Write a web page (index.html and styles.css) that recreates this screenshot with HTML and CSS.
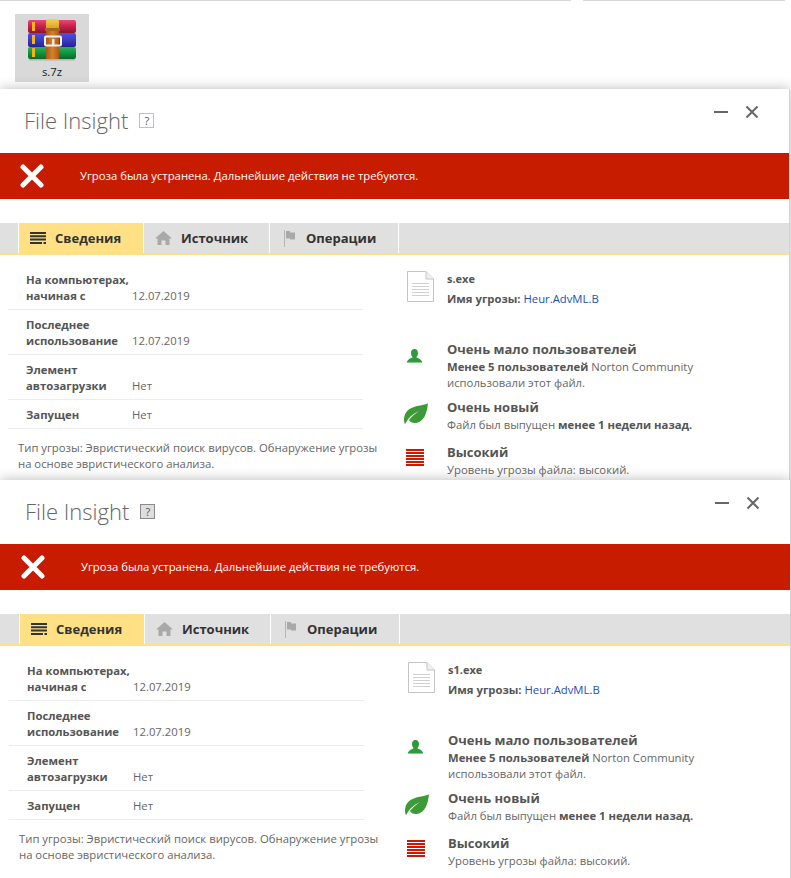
FILE: index.html
```html
<!DOCTYPE html>
<html lang="ru">
<head>
<meta charset="utf-8">
<title>File Insight</title>
<link rel="stylesheet" href="styles.css">
</head>
<body>
<svg class="defs" width="0" height="0" aria-hidden="true">
  <defs>
    <linearGradient id="g-red" x1="0" y1="0" x2="0" y2="1"><stop offset="0" stop-color="#e8487a"/><stop offset=".5" stop-color="#c6204c"/><stop offset="1" stop-color="#8c1434"/></linearGradient>
    <linearGradient id="g-blue" x1="0" y1="0" x2="0" y2="1"><stop offset="0" stop-color="#5050d8"/><stop offset=".5" stop-color="#3c3cc4"/><stop offset="1" stop-color="#24248c"/></linearGradient>
    <linearGradient id="g-green" x1="0" y1="0" x2="0" y2="1"><stop offset="0" stop-color="#2cb060"/><stop offset=".5" stop-color="#0f943f"/><stop offset="1" stop-color="#0a6a2c"/></linearGradient>
    <linearGradient id="g-gold" x1="0" y1="0" x2="0" y2="1"><stop offset="0" stop-color="#f4d24a"/><stop offset="1" stop-color="#d79a1e"/></linearGradient>
    <linearGradient id="g-belt" x1="0" y1="0" x2="1" y2="0"><stop offset="0" stop-color="#a85a14"/><stop offset=".5" stop-color="#d6802c"/><stop offset="1" stop-color="#a85a14"/></linearGradient>
  </defs>
  <symbol id="i-x" viewBox="0 0 24 24"><path d="M3 3 L21 21 M21 3 L3 21" stroke="#fff" stroke-width="5" stroke-linecap="round" fill="none"/></symbol>
  <symbol id="i-list" viewBox="0 0 16 12"><path d="M0 0h16v2H0zM0 3.300h16v2H0zM0 6.600h16v2H0zM0 10h12v2H0zM13.500 10H16v2h-2.500z" fill="#333"/></symbol>
  <symbol id="i-home" viewBox="0 0 17 14"><path d="M8.500 0 L17 7.500 H14.500 V14 H10.500 V9.500 H6.500 V14 H2.500 V7.500 H0 Z" fill="#a9a9a9"/></symbol>
  <symbol id="i-flag" viewBox="0 0 12 17"><path d="M0 0h1v17H0z" fill="#b5b5b5"/><path d="M2 1 H6 V2.500 H11 V9.500 H6 V8.500 H2 Z" fill="#a9a9a9"/></symbol>
  <symbol id="i-file" viewBox="0 0 27 31"><path d="M.5 .5 H19 L26.500 8 V30.500 H.5 Z" fill="#fff" stroke="#c4c4c4"/><path d="M19 .5 V8 H26.500" fill="#f1f1f1" stroke="#c4c4c4"/><path d="M5 12.500h17M5 15.500h17M5 18.500h17M5 21.500h17M5 24.500h17" stroke="#d0d0d0"/></symbol>
  <symbol id="i-user" viewBox="0 0 15 14"><path d="M7.500 0 C10 0 11 2 11 4 C11 6 10 7.500 9.300 8.300 C11 9.500 14 10 15 12.500 V13 H0 V12.500 C1 10 4 9.500 5.700 8.300 C5 7.500 4 6 4 4 C4 2 5 0 7.500 0 Z" fill="#2f9a3c"/><path d="M0 13.500h15" stroke="#8cc893"/></symbol>
  <symbol id="i-leaf" viewBox="0 0 24 21"><path d="M24 0 C22 2 16 2 10 4 C3 6 0 11 0 17 C0 18.500 .5 20 1 21 C2 20 3 17 6 14 C9 11 13 9 15 8 C12 10 8 13 5 17 C6 19 9 20.500 12 20 C20 19 23 10 24 0 Z" fill="#3c9a37"/></symbol>
  <symbol id="i-bars" viewBox="0 0 18 17"><path d="M0 0h18v2H0zM0 3h18v2H0zM0 6h18v2H0zM0 9h18v2H0zM0 12h18v2H0zM0 15h18v2H0z" fill="#c81c00"/></symbol>
  <symbol id="i-rar" viewBox="0 0 48 42">
    <rect x="0" y="1" width="48" height="13" rx="2" fill="url(#g-red)"/>
    <rect x="0" y="14" width="48" height="14" rx="2" fill="url(#g-blue)"/>
    <rect x="0" y="28" width="48" height="12" rx="2" fill="url(#g-green)"/>
    <rect x="4" y="3" width="3" height="9" fill="#f7b215"/>
    <rect x="4" y="16" width="3" height="9" fill="#f7b215"/>
    <rect x="4" y="29" width="3" height="9" fill="#f7b215"/>
    <rect x="18" y="0" width="13" height="11" rx="3" fill="url(#g-gold)"/>
    <rect x="17" y="9" width="15" height="3" fill="#a8651e"/>
    <rect x="18" y="12" width="13" height="29" fill="url(#g-belt)"/>
    <rect x="17" y="17.500" width="16" height="9" rx="1" fill="none" stroke="#f2f2f2" stroke-width="2"/>
    <rect x="24" y="20" width="2.500" height="6" fill="#e8e8e8"/>
    <rect x="1" y="40" width="46" height="1.500" fill="#b4b4b4"/>
  </symbol>
</svg>

<header class="desktop">
  <div class="rule"><span class="rule-a"></span><span class="rule-b"></span></div>
  <div class="file-tile">
    <svg class="rar"><use href="#i-rar"/></svg>
    <span class="file-name">s.7z</span>
  </div>
</header>

<section class="window">
  <div class="titlebar">
    <h1 class="title">File Insight</h1>
    <span class="help">?</span>
    <span class="min"></span>
    <svg class="close" viewBox="0 0 14 14"><path d="M1.500 1.500 L12.500 12.500 M12.500 1.500 L1.500 12.500" stroke="#666" stroke-width="2" fill="none"/></svg>
  </div>
  <div class="banner">
    <svg class="banner-x"><use href="#i-x"/></svg>
    <span>Угроза была устранена. Дальнейшие действия не требуются.</span>
  </div>
  <nav class="tabs">
    <span class="tab tab-active tab-a"><svg class="ic-list"><use href="#i-list"/></svg>Сведения</span>
    <span class="tab tab-b"><svg class="ic-home"><use href="#i-home"/></svg>Источник</span>
    <span class="tab tab-c"><svg class="ic-flag"><use href="#i-flag"/></svg>Операции</span>
  </nav>
  <div class="content">
    <div class="left">
      <div class="row"><span class="label">На компьютерах, начиная с</span><span class="value">12.07.2019</span></div>
      <div class="row"><span class="label">Последнее использование</span><span class="value">12.07.2019</span></div>
      <div class="row"><span class="label">Элемент автозагрузки</span><span class="value">Нет</span></div>
      <div class="row"><span class="label">Запущен</span><span class="value">Нет</span></div>
      <p class="desc">Тип угрозы: Эвристический поиск вирусов. Обнаружение угрозы на основе эвристического анализа.</p>
    </div>
    <div class="right">
      <div class="item item-file">
        <div class="icon-col"><svg class="ic-file"><use href="#i-file"/></svg></div>
        <div>
          <div class="fname">s.exe</div>
          <div class="threat"><b>Имя угрозы:</b> <a class="link">Heur.AdvML.B</a></div>
        </div>
      </div>
      <div class="item item-users">
        <div class="icon-col"><svg class="ic-user"><use href="#i-user"/></svg></div>
        <div>
          <div class="head">Очень мало пользователей</div>
          <div class="text"><b>Менее 5 пользователей</b> Norton Community<br>использовали этот файл.</div>
        </div>
      </div>
      <div class="item item-new">
        <div class="icon-col"><svg class="ic-leaf"><use href="#i-leaf"/></svg></div>
        <div>
          <div class="head">Очень новый</div>
          <div class="text">Файл был выпущен <b>менее 1 недели назад.</b></div>
        </div>
      </div>
      <div class="item item-level">
        <div class="icon-col"><svg class="ic-bars"><use href="#i-bars"/></svg></div>
        <div>
          <div class="head">Высокий</div>
          <div class="text">Уровень угрозы файла: высокий.</div>
        </div>
      </div>
    </div>
  </div>
</section>

<section class="window window-second">
  <div class="titlebar">
    <h1 class="title">File Insight</h1>
    <span class="help help-hover">?</span>
    <span class="min"></span>
    <svg class="close" viewBox="0 0 14 14"><path d="M1.500 1.500 L12.500 12.500 M12.500 1.500 L1.500 12.500" stroke="#666" stroke-width="2" fill="none"/></svg>
  </div>
  <div class="banner">
    <svg class="banner-x"><use href="#i-x"/></svg>
    <span>Угроза была устранена. Дальнейшие действия не требуются.</span>
  </div>
  <nav class="tabs">
    <span class="tab tab-active tab-a"><svg class="ic-list"><use href="#i-list"/></svg>Сведения</span>
    <span class="tab tab-b"><svg class="ic-home"><use href="#i-home"/></svg>Источник</span>
    <span class="tab tab-c"><svg class="ic-flag"><use href="#i-flag"/></svg>Операции</span>
  </nav>
  <div class="content">
    <div class="left">
      <div class="row"><span class="label">На компьютерах, начиная с</span><span class="value">12.07.2019</span></div>
      <div class="row"><span class="label">Последнее использование</span><span class="value">12.07.2019</span></div>
      <div class="row"><span class="label">Элемент автозагрузки</span><span class="value">Нет</span></div>
      <div class="row"><span class="label">Запущен</span><span class="value">Нет</span></div>
      <p class="desc">Тип угрозы: Эвристический поиск вирусов. Обнаружение угрозы на основе эвристического анализа.</p>
    </div>
    <div class="right">
      <div class="item item-file">
        <div class="icon-col"><svg class="ic-file"><use href="#i-file"/></svg></div>
        <div>
          <div class="fname">s1.exe</div>
          <div class="threat"><b>Имя угрозы:</b> <a class="link">Heur.AdvML.B</a></div>
        </div>
      </div>
      <div class="item item-users">
        <div class="icon-col"><svg class="ic-user"><use href="#i-user"/></svg></div>
        <div>
          <div class="head">Очень мало пользователей</div>
          <div class="text"><b>Менее 5 пользователей</b> Norton Community<br>использовали этот файл.</div>
        </div>
      </div>
      <div class="item item-new">
        <div class="icon-col"><svg class="ic-leaf"><use href="#i-leaf"/></svg></div>
        <div>
          <div class="head">Очень новый</div>
          <div class="text">Файл был выпущен <b>менее 1 недели назад.</b></div>
        </div>
      </div>
      <div class="item item-level">
        <div class="icon-col"><svg class="ic-bars"><use href="#i-bars"/></svg></div>
        <div>
          <div class="head">Высокий</div>
          <div class="text">Уровень угрозы файла: высокий.</div>
        </div>
      </div>
    </div>
  </div>
</section>
</body>
</html>
```
FILE: styles.css
```css
* { box-sizing: border-box; }
html, body { margin: 0; padding: 0; height: 878px; overflow: hidden; background: #fff; }
body { font-family: "Open Sans", "Noto Sans", sans-serif; font-size: 11.3px; line-height: 16px; color: #666; }
.defs { position: absolute; }
svg { display: block; }

.desktop { height: 89px; }
.rule { display: flex; gap: 12px; height: 1px; }
.rule-a { width: 571px; background: #d8d8d8; }
.rule-b { width: 202px; background: #d8d8d8; }
.file-tile { width: 74px; height: 68px; margin: 13px 0 0 15px; background: #d9d9d9; display: flex; flex-direction: column; align-items: center; padding-top: 5px; }
.rar { width: 48px; height: 42px; }
.file-name { color: #222; margin-top: 3px; }

.window { --x: 0px; position: relative; width: 790px; height: 391px; overflow: hidden; background: #fff; border-right: 1px solid #d4d4d4; box-shadow: 0 0 12px rgba(0,0,0,.28); clip-path: inset(-14px -1px 0 -14px); }
.window-second { --x: 1px; width: 791px; height: 398px; }

.titlebar { height: 64px; display: flex; align-items: flex-start; padding-left: calc(24px + var(--x)); }
.title { margin: 14px 0 0; font-weight: 300; font-size: 22px; line-height: 34px; color: #666; }
.help { width: 15px; height: 15px; margin: 24px 0 0 11px; border: 1px solid #c0c0c0; font-size: 11px; line-height: 13px; text-align: center; color: #555; }
.help-hover { background: #dedede; border-color: #8a8a8a; }
.min { width: 14px; height: 2px; margin: 22px 0 0 auto; background: #666; }
.close { width: 14px; height: 14px; margin: 16px 30px 0 17px; }

.banner { height: 46px; background: #c81c00; color: #fff; display: flex; align-items: center; padding-left: calc(20px + var(--x)); }
.banner-x { width: 24px; height: 24px; margin-right: 36px; }

.tabs { height: 32px; margin-top: 24px; background: #e0e0e0; border-bottom: 2px solid #ffe085; display: flex; padding-left: calc(18px + var(--x)); }
.tab { display: flex; align-items: center; height: 30px; border-left: 1px solid #fff; font-weight: 700; font-size: 13px; color: #333; }
.tab-a { width: 125px; padding-left: 11px; }
.tab-b { width: 126px; padding-left: 11px; }
.tab-c { width: 130px; padding-left: 14px; border-right: 1px solid #fff; }
.tab-active { background: #ffe085; }
.ic-list { width: 16px; height: 12px; margin-right: 9px; }
.ic-home { width: 17px; height: 14px; margin-right: 9px; }
.ic-flag { width: 12px; height: 17px; margin-right: 10px; }

.content { display: flex; padding-left: var(--x); }
.left { width: 399px; padding: 10px 0 0 8px; }
.row { width: 355px; display: flex; align-items: flex-end; padding: 7px 0 5px 18px; border-bottom: 1px solid #ececec; }
.label { width: 106px; font-weight: 700; color: #555; flex: none; }
.value { color: #666; }
.desc { margin: 11px 0 0 10px; width: 368px; }

.right { padding: 16px 0 0 8px; }
.item { display: flex; }
.icon-col { width: 40px; flex: none; }
.right b { color: #555; }
.fname { font-weight: 700; font-size: 11px; color: #555; }
.threat { margin-top: 4px; }
.link { color: #1a4fb5; }
.head { font-weight: 700; font-size: 13px; line-height: 18px; margin-bottom: 1px; color: #555; }
.text { color: #666; }
.item-users { margin-top: 33px; }
.item-new { margin-top: 7px; }
.item-level { margin-top: 10px; }
.ic-file { width: 27px; height: 31px; }
.ic-user { width: 15px; height: 14px; margin: 9px 0 0 0; }
.ic-leaf { width: 24px; height: 21px; margin: 5px 0 0 -3px; }
.ic-bars { width: 18px; height: 17px; margin: 6px 0 0 -1px; }
```
